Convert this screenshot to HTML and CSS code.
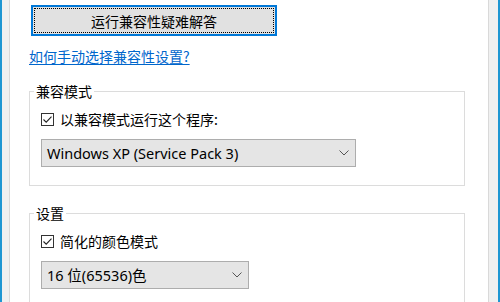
FILE: index.html
```html
<!DOCTYPE html>
<html lang="zh-CN">
<head>
<meta charset="utf-8">
<link rel="stylesheet" href="styles.css">
</head>
<body>
<div class="window">
  <div class="panel">
    <button class="btn"><span class="focus">运行兼容性疑难解答</span></button>
    <div class="link-row"><a class="link" href="#">如何手动选择兼容性设置?</a></div>

    <fieldset class="group">
      <legend class="group-title">兼容模式</legend>
      <label class="check-row">
        <span class="checkbox"><svg width="13" height="13" viewBox="0 0 13 13"><path d="M2.5 6.5 L5.2 9.2 L10.5 3.6" fill="none" stroke="#222" stroke-width="1.1"/></svg></span>
        <span class="check-label">以兼容模式运行这个程序:</span>
      </label>
      <div class="select select-wide">
        <span class="select-text">Windows XP (Service Pack 3)</span>
        <svg class="chev" width="10" height="6" viewBox="0 0 10 6"><path d="M0.5 0.5 L5 5 L9.5 0.5" fill="none" stroke="#555" stroke-width="1"/></svg>
      </div>
    </fieldset>

    <fieldset class="group group-second">
      <legend class="group-title">设置</legend>
      <label class="check-row">
        <span class="checkbox"><svg width="13" height="13" viewBox="0 0 13 13"><path d="M2.5 6.5 L5.2 9.2 L10.5 3.6" fill="none" stroke="#222" stroke-width="1.1"/></svg></span>
        <span class="check-label">简化的颜色模式</span>
      </label>
      <div class="select select-narrow">
        <span class="select-text">16 位(65536)色</span>
        <svg class="chev" width="10" height="6" viewBox="0 0 10 6"><path d="M0.5 0.5 L5 5 L9.5 0.5" fill="none" stroke="#555" stroke-width="1"/></svg>
      </div>
    </fieldset>
  </div>
</div>
</body>
</html>
```

FILE: styles.css
```css
html, body {
  margin: 0;
  padding: 0;
}
body {
  font-family: "Noto Sans CJK SC", sans-serif;
  font-size: 14px;
  line-height: 18px;
  color: #000;
}
.window {
  box-sizing: border-box;
  width: 500px;
  height: 302px;
  overflow: hidden;
  display: flex;
  background: #f0f0f0;
  border-left: 2px solid #1e96d2;
  border-right: 2px solid #1e96d2;
  padding: 0 9px 0 7px;
}
.panel {
  flex: 1;
  background: #fff;
  border-left: 1px solid #d9d9d9;
  border-right: 1px solid #d9d9d9;
  padding: 5px 0 0 19px;
}
.btn {
  box-sizing: border-box;
  display: flex;
  margin: 0 0 0 2px;
  width: 246px;
  height: 31px;
  padding: 1px;
  background: #e1e1e1;
  border: 2px solid #0078d7;
  font: inherit;
  color: #000;
}
.focus {
  flex: 1;
  display: flex;
  align-items: center;
  justify-content: center;
  border: 1px dotted #000;
  font-family: "Noto Sans CJK SC", sans-serif;
  font-size: 14px;
  line-height: 18px;
}
.link-row {
  margin-top: 11px;
  height: 18px;
}
.link {
  color: #0066cc;
  text-decoration: underline;
  text-underline-offset: 2px;
}
.group {
  box-sizing: border-box;
  width: 436px;
  margin: 17px 0 0 0;
  padding: 10px 11px 18px 11px;
  border: 1px solid #dcdcdc;
  min-width: 0;
}
.group-second {
  margin-top: 18px;
}
.group-title {
  margin-left: -7px;
  padding: 0 2px;
  line-height: 18px;
  height: 18px;
}
.check-row {
  display: flex;
  align-items: center;
  height: 18px;
  gap: 6px;
}
.checkbox {
  box-sizing: border-box;
  width: 13px;
  height: 13px;
  border: 1px solid #333;
  background: #fff;
  display: flex;
  align-items: center;
  justify-content: center;
}
.checkbox svg {
  display: block;
  margin: -1px;
}
.check-label {
  line-height: 18px;
}
.select {
  box-sizing: border-box;
  margin-top: 11px;
  height: 28px;
  display: flex;
  align-items: center;
  justify-content: space-between;
  padding: 0 6px 0 5px;
  background: #e5e5e5;
  border: 1px solid #adadad;
}
.select-wide {
  width: 315px;
}
.select-narrow {
  width: 208px;
}
.select-text {
  font-family: "Noto Sans", "Noto Sans CJK SC", sans-serif;
  font-size: 14.5px;
  line-height: 18px;
}
.chev {
  display: block;
}
```
